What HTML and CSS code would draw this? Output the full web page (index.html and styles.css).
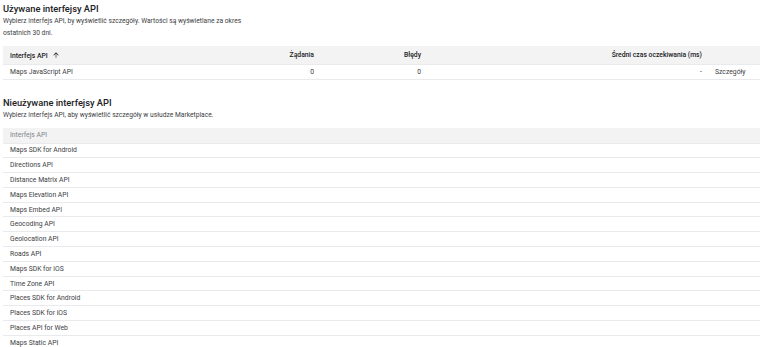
FILE: index.html
```html
<!DOCTYPE html>
<html lang="pl">
<head>
  <meta charset="UTF-8">
  <meta name="viewport" content="width=device-width, initial-scale=1">
  <title>Interfejsy API</title>
  <link rel="stylesheet" href="styles.css">
</head>
<body>

  <section class="section">
    <h2>Używane interfejsy API</h2>
    <p class="desc narrow">Wybierz interfejs API, by wyświetlić szczegóły. Wartości są wyświetlane za okres ostatnich 30 dni.</p>

    <table class="api-table used">
      <colgroup>
        <col class="c-name">
        <col class="c-req">
        <col class="c-err">
        <col class="c-lat">
        <col class="c-link">
      </colgroup>
      <thead>
        <tr>
          <th class="left">Interfejs API
            <svg class="sort" viewBox="0 0 24 24" width="8" height="8"><path d="M4 12l1.41 1.41L11 7.83V20h2V7.83l5.58 5.59L20 12l-8-8-8 8z"/></svg>
          </th>
          <th class="num">Żądania</th>
          <th class="num">Błędy</th>
          <th class="num">Średni czas oczekiwania (ms)</th>
          <th></th>
        </tr>
      </thead>
      <tbody>
        <tr>
          <td class="left">Maps JavaScript API</td>
          <td class="num">0</td>
          <td class="num">0</td>
          <td class="num">-</td>
          <td class="link">Szczegóły</td>
        </tr>
      </tbody>
    </table>
  </section>

  <section class="section second">
    <h2>Nieużywane interfejsy API</h2>
    <p class="desc">Wybierz interfejs API, aby wyświetlić szczegóły w usłudze Marketplace.</p>

    <table class="api-table unused">
      <thead>
        <tr><th class="left">Interfejs API</th></tr>
      </thead>
      <tbody>
        <tr><td class="left">Maps SDK for Android</td></tr>
        <tr><td class="left">Directions API</td></tr>
        <tr><td class="left">Distance Matrix API</td></tr>
        <tr><td class="left">Maps Elevation API</td></tr>
        <tr><td class="left">Maps Embed API</td></tr>
        <tr><td class="left">Geocoding API</td></tr>
        <tr><td class="left">Geolocation API</td></tr>
        <tr><td class="left">Roads API</td></tr>
        <tr><td class="left">Maps SDK for iOS</td></tr>
        <tr><td class="left">Time Zone API</td></tr>
        <tr><td class="left">Places SDK for Android</td></tr>
        <tr><td class="left">Places SDK for iOS</td></tr>
        <tr><td class="left">Places API for Web</td></tr>
        <tr><td class="left">Maps Static API</td></tr>
      </tbody>
    </table>
  </section>

</body>
</html>
```

FILE: styles.css
```css
body {
  font-family: Roboto, "Noto Sans", Arial, sans-serif;
  color: #3c4043;
  background: #fff;
  margin: 0;
  padding: 2px 0 0 3px;
}
h2 {
  margin: 0;
  font-size: 9.3px;
  line-height: 13px;
  font-weight: 500;
  color: #202124;
}
.desc {
  margin: 1px 0 0;
  font-size: 6.7px;
  line-height: 11.5px;
}
.desc.narrow {
  max-width: 260px;
}
.second {
  margin-top: 16px;
}
.api-table {
  width: 100%;
  border-collapse: collapse;
  table-layout: fixed;
  font-size: 6.8px;
}
.used {
  margin-top: 7px;
}
.unused {
  margin-top: 6.5px;
}
.c-name { width: 240px; }
.c-req { width: 77px; }
.c-err { width: 107px; }
.c-lat { width: 281px; }
.api-table th {
  background: #f3f3f3;
  font-weight: 500;
  color: #202124;
  height: 18px;
  padding: 0 6px 0 7px;
  border-bottom: 1px solid #e8eaed;
}
.api-table td {
  height: 14px;
  padding: 0 6px 0 7px;
  border-bottom: 1px solid #e8eaed;
}
.unused th {
  height: 14.5px;
  font-weight: 400;
  color: #80868b;
}
.unused td {
  height: 13.8px;
}
.left {
  text-align: left;
}
.num {
  text-align: right;
}
.link {
  padding-left: 10px;
}
.sort {
  vertical-align: -1px;
  margin-left: 3px;
  fill: #202124;
}
```
